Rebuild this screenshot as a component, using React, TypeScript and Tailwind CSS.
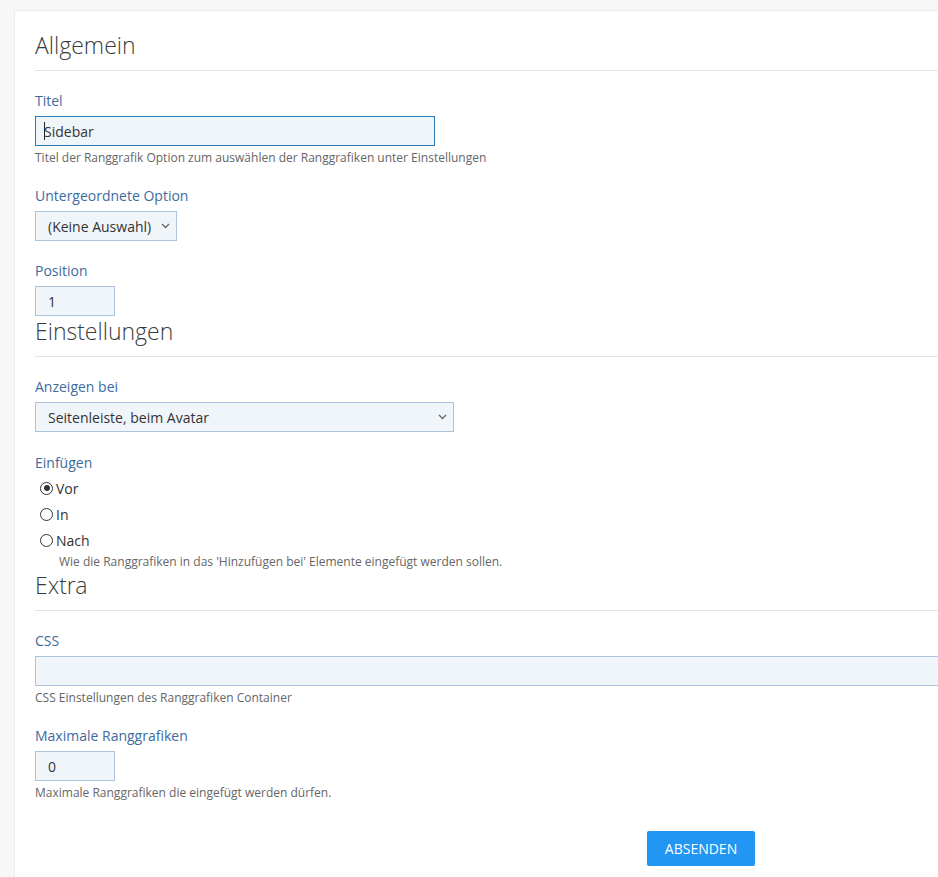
import React from "react";

const labelCls = "block text-[14px] leading-[20px] text-[#3d6b9e] mb-[5px]";
const helpCls = "text-[12px] leading-[17px] text-[#666] mt-[3px]";
const inputCls =
  "h-[30px] bg-[#f0f5fa] border border-[#abc3dc] px-[12px] text-[14px] text-[#333] flex items-center";

function Heading({ children }: { children: React.ReactNode }) {
  return (
    <div
      className="text-[23px] font-light leading-[30px] text-[#3a3a3a] pb-[10px] border-b border-[#e3e3e3]"
      style={{ fontFamily: '"Open Sans Light", "Open Sans", sans-serif' }}
    >
      {children}
    </div>
  );
}

function Chevron() {
  return (
    <svg width="9" height="6" viewBox="0 0 9 6" className="shrink-0">
      <path d="M1 1 L4.5 4.5 L8 1" fill="none" stroke="#666" strokeWidth="1.3" />
    </svg>
  );
}

function Radio({ checked, label }: { checked?: boolean; label: string }) {
  return (
    <div className="flex items-center h-[26px] pl-[5px]">
      <span className="w-[13px] h-[13px] rounded-full border border-[#333] flex items-center justify-center mr-[3px]">
        {checked && <span className="w-[6px] h-[6px] rounded-full bg-[#333]" />}
      </span>
      <span className="text-[14px] text-[#333]">{label}</span>
    </div>
  );
}

export default function App() {
  return (
    <div
      className="min-h-[877px] bg-[#f7f7f7] overflow-hidden pt-[10px] pl-[14px]"
      style={{ fontFamily: '"Open Sans", "Noto Sans", sans-serif' }}
    >
      <div className="w-[1373px] min-h-[867px] bg-white border-t border-l border-[#e9ecf3] pl-[20px] pr-[20px] pt-[19px]">
        <Heading>Allgemein</Heading>

        <div className="pt-[20px]">
          <label className={labelCls}>Titel</label>
          <div className="h-[30px] w-[400px] bg-[#f0f5fa] border border-[#2a7ab8] px-[8px] text-[14px] text-[#333] flex items-center">
            <span className="w-[1px] h-[18px] bg-[#222]" />
            <span className="-ml-[1px]">Sidebar</span>
          </div>
          <div className={helpCls}>
            Titel der Ranggrafik Option zum auswählen der Ranggrafiken unter Einstellungen
          </div>
        </div>

        <div className="pt-[20px]">
          <label className={labelCls}>Untergeordnete Option</label>
          <div className={`${inputCls} w-[142px] justify-between pr-[6px]`}>
            <span>(Keine Auswahl)</span>
            <Chevron />
          </div>
        </div>

        <div className="pt-[20px]">
          <label className={labelCls}>Position</label>
          <div className={`${inputCls} w-[80px]`}>1</div>
        </div>

        <Heading>Einstellungen</Heading>

        <div className="pt-[20px]">
          <label className={labelCls}>Anzeigen bei</label>
          <div className={`${inputCls} w-[419px] justify-between pr-[6px]`}>
            <span>Seitenleiste, beim Avatar</span>
            <Chevron />
          </div>
        </div>

        <div className="pt-[21px]">
          <label className="block text-[14px] leading-[20px] text-[#3d6b9e] mb-[2px]">Einfügen</label>
          <Radio checked label="Vor" />
          <Radio label="In" />
          <Radio label="Nach" />
          <div className="text-[12px] leading-[17px] text-[#666] pl-[24px]">
            Wie die Ranggrafiken in das 'Hinzufügen bei' Elemente eingefügt werden sollen.
          </div>
        </div>

        <Heading>Extra</Heading>

        <div className="pt-[20px]">
          <label className={labelCls}>CSS</label>
          <div className={`${inputCls} w-full`} />
          <div className={helpCls}>CSS Einstellungen des Ranggrafiken Container</div>
        </div>

        <div className="pt-[20px]">
          <label className={labelCls}>Maximale Ranggrafiken</label>
          <div className={`${inputCls} w-[80px]`}>0</div>
          <div className={helpCls}>Maximale Ranggrafiken die eingefügt werden dürfen.</div>
        </div>

        <div className="pt-[30px] flex justify-center">
          <button className="h-[35px] w-[108px] bg-[#2196f3] text-white text-[14px] rounded-[2px]">
            ABSENDEN
          </button>
        </div>
      </div>
    </div>
  );
}
